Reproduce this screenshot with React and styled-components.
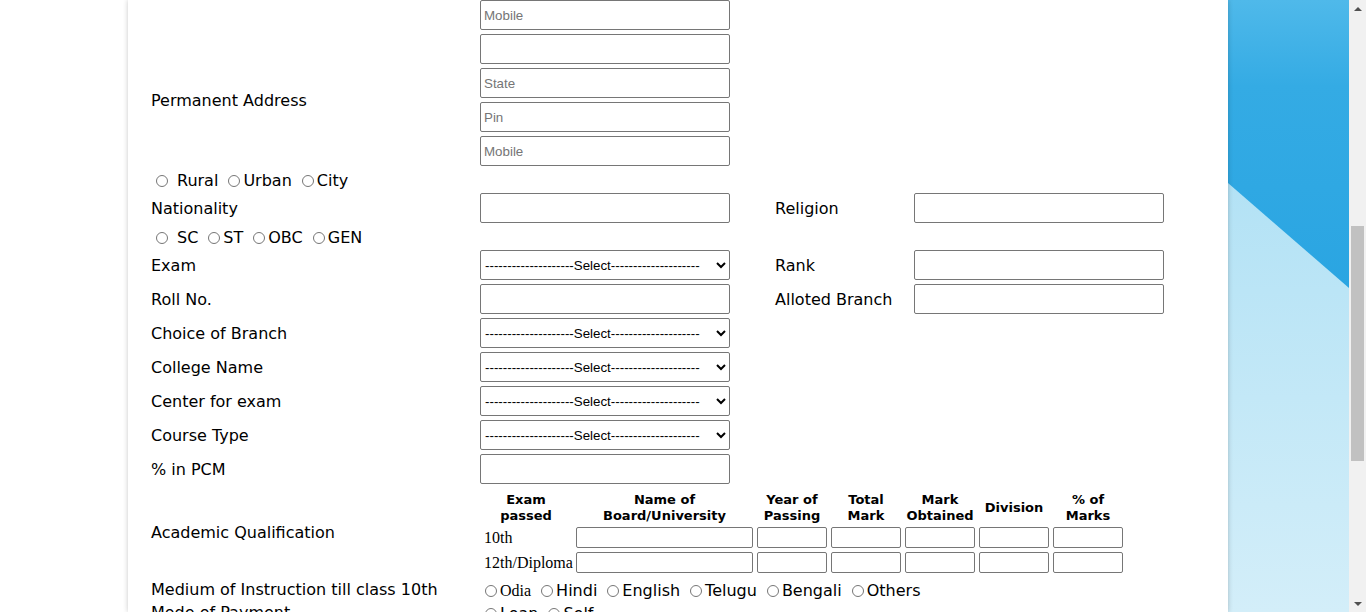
import React from "react";
import styled, { createGlobalStyle } from "styled-components";

const GlobalStyle = createGlobalStyle`
  html, body {
    margin: 0;
    padding: 0;
    height: 612px;
    overflow: hidden;
    background: #ffffff;
  }
`;

const Page = styled.div`
  display: flex;
  width: 1366px;
  height: 612px;
  overflow: hidden;
`;

const Gutter = styled.div`
  flex: none;
  width: 128px;
  background: #ffffff;
`;

const Main = styled.main`
  flex: none;
  width: 1100px;
  box-sizing: border-box;
  padding-left: 23px;
  background: #ffffff;
  box-shadow: 0 0 5px rgba(0, 0, 0, 0.22);
  position: relative;
  z-index: 1;
  font-family: "DejaVu Sans", Verdana, sans-serif;
  font-size: 16px;
  color: #000;
`;

const Form = styled.div`
  display: flex;
  flex-direction: column;
  gap: 4px;
`;

const FormRow = styled.div`
  display: grid;
  grid-template-columns: 329px 295px 139px 250px;
  align-items: center;
  min-height: ${(p) => (p.$compact ? 19 : 0)}px;
`;

const Label = styled.div`
  line-height: 19px;
  white-space: nowrap;
`;

const Stack = styled.div`
  display: flex;
  flex-direction: column;
  gap: 4px;
`;

const Wide = styled.div`
  grid-column: ${(p) => p.$from || 1} / -1;
  line-height: 19px;
  height: ${(p) => (p.$auto ? "auto" : "19px")};
  white-space: nowrap;
  padding-top: ${(p) => (p.$auto ? 0 : 1)}px;
  box-sizing: border-box;
`;

const Option = styled.span`
  margin-left: ${(p) => p.$gap || 0}px;
  margin-right: ${(p) => p.$after || 0}px;
  font-family: ${(p) =>
    p.$serif
      ? '"Liberation Serif", "Times New Roman", serif'
      : '"DejaVu Sans", Verdana, sans-serif'};
`;

const TextInput = styled.input`
  display: block;
  box-sizing: border-box;
  width: ${(p) => p.$w || "250px"};
  height: ${(p) => p.$h || 30}px;
  margin: 0;
  padding: 1px 3px;
  border: 1px solid #767676;
  border-radius: 2px;
  background: #fff;
  font-family: Arial, "Liberation Sans", sans-serif;
  font-size: 13.33px;
  color: #000;
  &::placeholder {
    color: #757575;
  }
`;

const Select = styled.select`
  display: block;
  box-sizing: border-box;
  width: 250px;
  height: 30px;
  margin: 0;
  padding: 0;
  border: 1px solid #767676;
  border-radius: 2px;
  background: #fff;
  font-family: Arial, "Liberation Sans", sans-serif;
  font-size: 13.33px;
  color: #000;
`;

const Radio = styled.input.attrs({ type: "radio" })`
  width: 12px;
  height: 12px;
  margin: 0 3px 0 5px;
  vertical-align: -1px;
`;

const QualGrid = styled.div`
  display: grid;
  grid-template-columns: 92px 177px repeat(5, 70px);
  column-gap: 4px;
  row-gap: 4px;
  padding: 3px 0;
  align-items: center;
`;

const HeadCell = styled.div`
  box-sizing: border-box;
  height: 32px;
  padding-top: 1px;
  display: flex;
  align-items: center;
  justify-content: center;
  font-weight: bold;
  font-size: 13px;
  line-height: 16px;
  text-align: center;
  white-space: pre;
`;

const RowLabel = styled.div`
  font-family: "Liberation Serif", "Times New Roman", serif;
  font-size: 16px;
  line-height: 19px;
  padding-left: 4px;
  white-space: nowrap;
`;

const BluePanel = styled.div`
  flex: 1;
  height: 612px;
  overflow: hidden;
  svg {
    display: block;
  }
`;

const ScrollBar = styled.div`
  flex: none;
  width: 17px;
  height: 612px;
  background: #f1f1f1;
  display: flex;
  flex-direction: column;
`;

const ArrowBtn = styled.div`
  height: 17px;
  flex: none;
  display: flex;
  align-items: center;
  justify-content: center;
  &::after {
    content: "";
    width: 0;
    height: 0;
    border-left: 4px solid transparent;
    border-right: 4px solid transparent;
    ${(p) =>
      p.$down
        ? "border-top: 4px solid #505050;"
        : "border-bottom: 4px solid #505050;"}
  }
`;

const Track = styled.div`
  flex: 1;
`;

const Thumb = styled.div`
  margin: 209px 2px 0;
  height: 235px;
  background: #c1c1c1;
`;

const dashes = "-".repeat(20);
const selectText = `${dashes}Select${dashes}`;

function SelectBox() {
  return (
    <Select defaultValue="">
      <option value="">{selectText}</option>
    </Select>
  );
}

function RadioGroup({ name, items, firstGap = 0, serifFirst = false }) {
  return items.map((t, i) => (
    <React.Fragment key={t}>
      <Radio name={name} />
      <Option
        $gap={i === 0 ? firstGap : 0}
        $after={i < items.length - 1 ? 5 : 0}
        $serif={serifFirst && i === 0}
      >
        {t}
      </Option>
    </React.Fragment>
  ));
}

const headers = [
  "Exam\npassed",
  "Name of\nBoard/University",
  "Year of\nPassing",
  "Total\nMark",
  "Mark\nObtained",
  "Division",
  "% of\nMarks",
];

export default function App() {
  return (
    <>
      <GlobalStyle />
      <Page>
        <Gutter />
        <Main>
          <Form>
            <FormRow>
              <Label />
              <TextInput placeholder="Mobile" />
            </FormRow>
            <FormRow>
              <Label>Permanent Address</Label>
              <Stack>
                <TextInput />
                <TextInput placeholder="State" />
                <TextInput placeholder="Pin" />
                <TextInput placeholder="Mobile" />
              </Stack>
            </FormRow>
            <FormRow $compact>
              <Wide>
                <RadioGroup name="area" items={["Rural", "Urban", "City"]} firstGap={6} />
              </Wide>
            </FormRow>
            <FormRow>
              <Label>Nationality</Label>
              <TextInput />
              <Label>Religion</Label>
              <TextInput />
            </FormRow>
            <FormRow $compact>
              <Wide>
                <RadioGroup name="caste" items={["SC", "ST", "OBC", "GEN"]} firstGap={6} />
              </Wide>
            </FormRow>
            <FormRow>
              <Label>Exam</Label>
              <SelectBox />
              <Label>Rank</Label>
              <TextInput />
            </FormRow>
            <FormRow>
              <Label>Roll No.</Label>
              <TextInput />
              <Label>Alloted Branch</Label>
              <TextInput />
            </FormRow>
            <FormRow>
              <Label>Choice of Branch</Label>
              <SelectBox />
            </FormRow>
            <FormRow>
              <Label>College Name</Label>
              <SelectBox />
            </FormRow>
            <FormRow>
              <Label>Center for exam</Label>
              <SelectBox />
            </FormRow>
            <FormRow>
              <Label>Course Type</Label>
              <SelectBox />
            </FormRow>
            <FormRow>
              <Label>% in PCM</Label>
              <TextInput />
            </FormRow>
            <FormRow>
              <Label>Academic Qualification</Label>
              <Wide $from={2} $auto>
                <QualGrid>
                  {headers.map((h) => (
                    <HeadCell key={h}>{h}</HeadCell>
                  ))}
                  {["10th", "12th/Diploma"].map((r) => (
                    <React.Fragment key={r}>
                      <RowLabel>{r}</RowLabel>
                      {headers.slice(1).map((h) => (
                        <TextInput key={h} $w="100%" $h={21} />
                      ))}
                    </React.Fragment>
                  ))}
                </QualGrid>
              </Wide>
            </FormRow>
            <FormRow $compact>
              <Label>Medium of Instruction till class 10th</Label>
              <Wide $from={2}>
                <RadioGroup
                  name="medium"
                  items={["Odia", "Hindi", "English", "Telugu", "Bengali", "Others"]}
                  serifFirst
                />
              </Wide>
            </FormRow>
            <FormRow $compact>
              <Label>Mode of Payment</Label>
              <Wide $from={2}>
                <RadioGroup name="pay" items={["Loan", "Self"]} />
              </Wide>
            </FormRow>
          </Form>
        </Main>
        <BluePanel>
          <svg width="121" height="612" viewBox="0 0 121 612" preserveAspectRatio="none">
            <defs>
              <linearGradient id="darkBlue" x1="0" y1="0" x2="0" y2="1">
                <stop offset="0" stopColor="#4fb9ea" />
                <stop offset="0.3" stopColor="#34abe4" />
                <stop offset="1" stopColor="#2aa5e2" />
              </linearGradient>
              <linearGradient id="lightBlue" x1="0" y1="0" x2="0" y2="1">
                <stop offset="0.3" stopColor="#b3e2f5" />
                <stop offset="1" stopColor="#d3eef9" />
              </linearGradient>
            </defs>
            <rect x="0" y="0" width="121" height="612" fill="url(#lightBlue)" />
            <polygon points="0,0 121,0 121,288 0,183" fill="url(#darkBlue)" />
          </svg>
        </BluePanel>
        <ScrollBar>
          <ArrowBtn />
          <Track>
            <Thumb />
          </Track>
          <ArrowBtn $down />
        </ScrollBar>
      </Page>
    </>
  );
}
